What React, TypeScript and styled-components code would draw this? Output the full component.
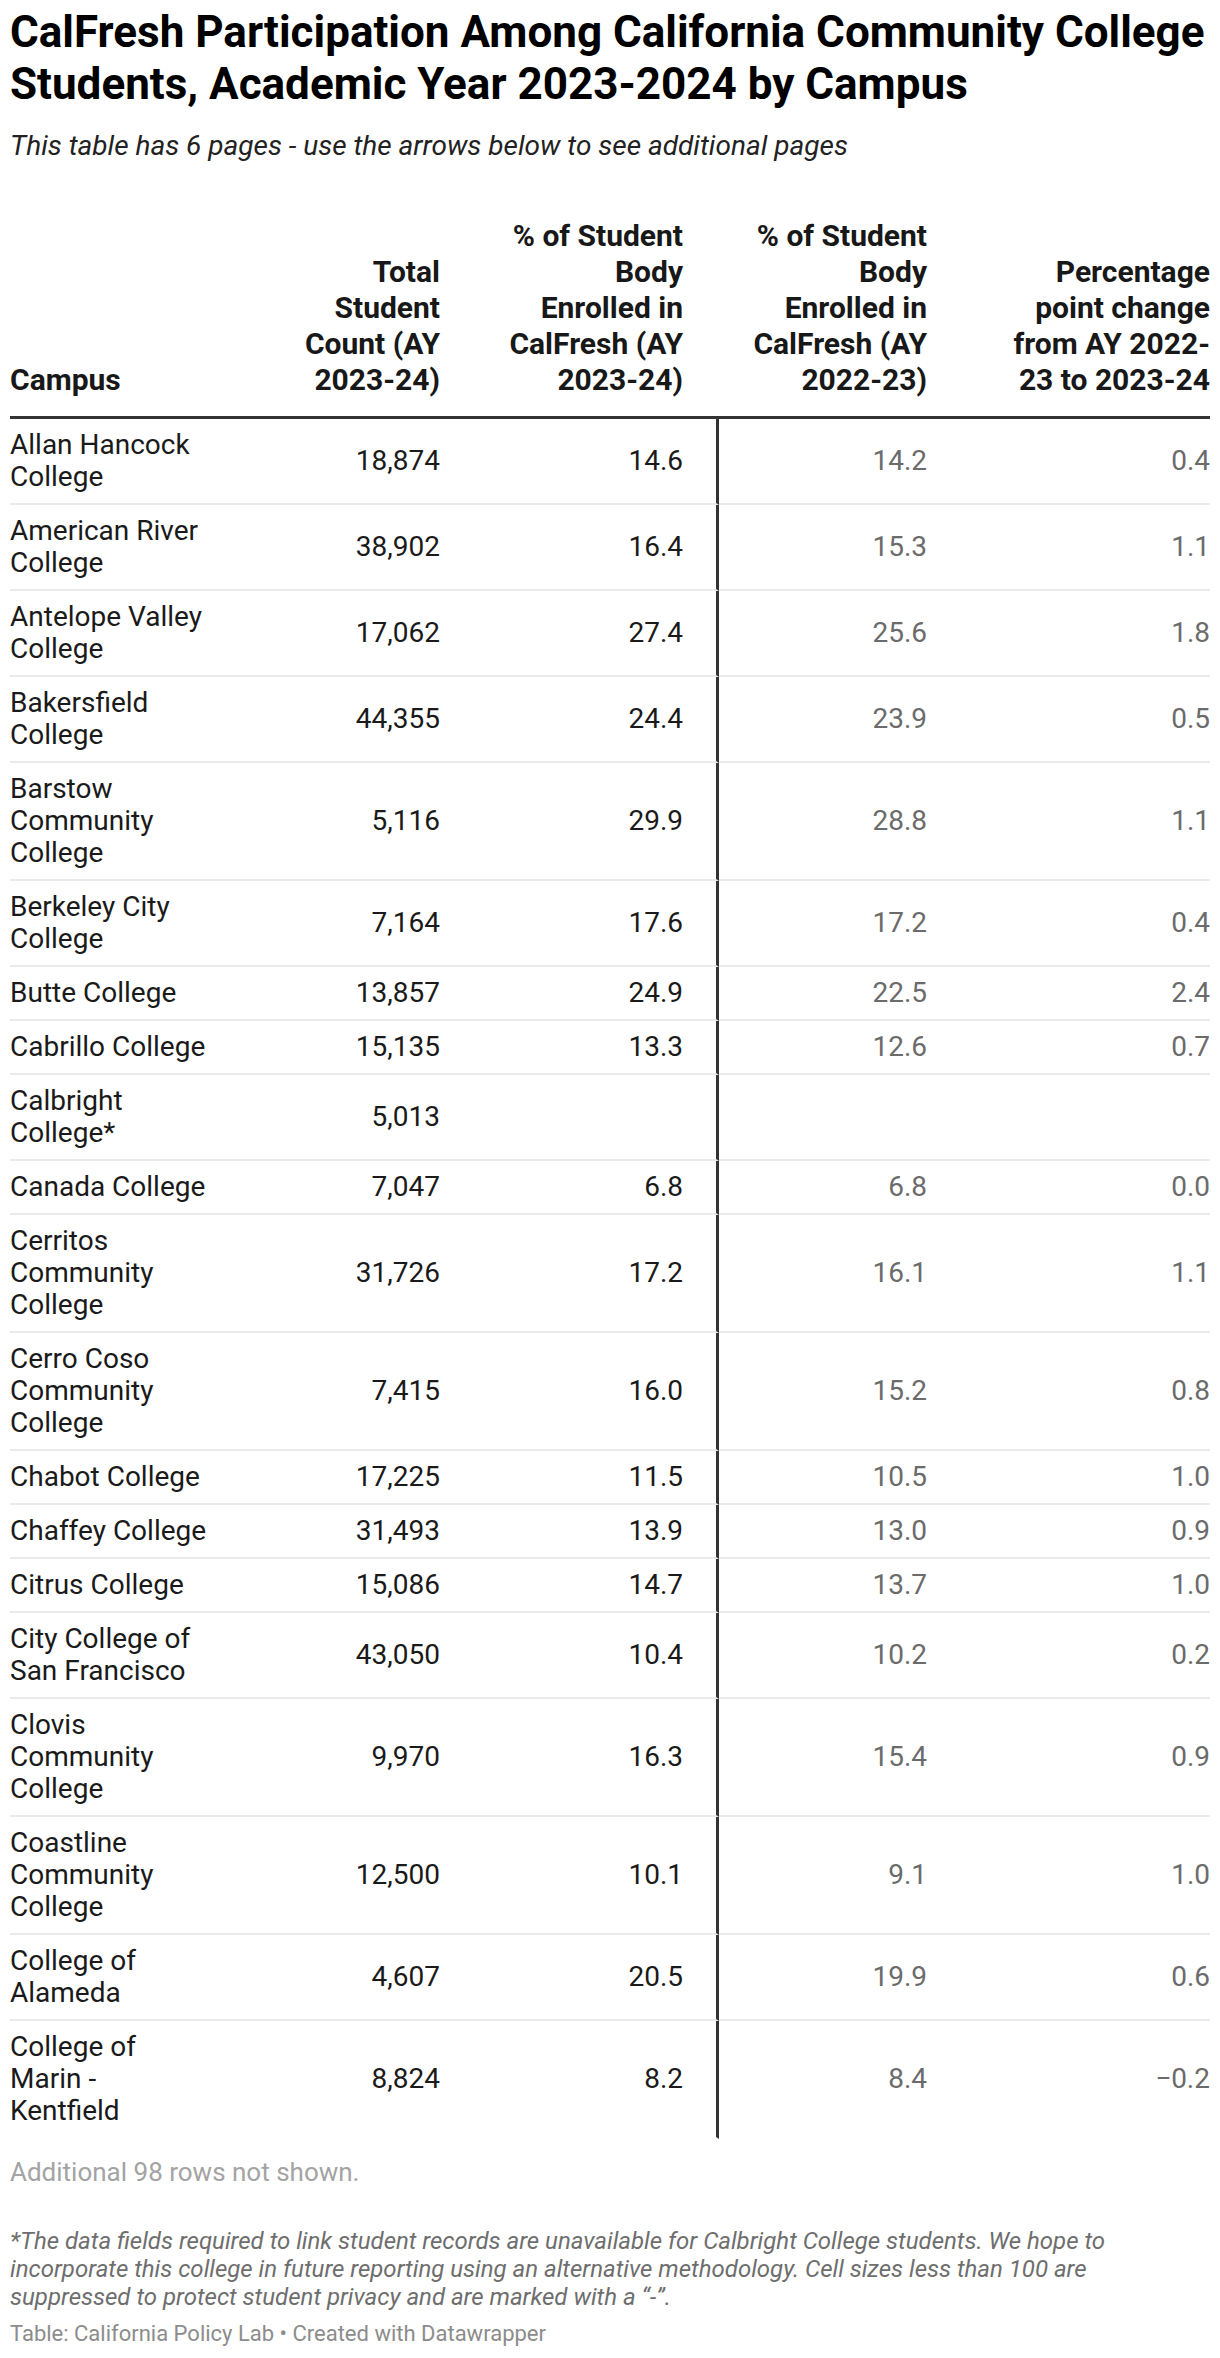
import React from "react";
import styled, { createGlobalStyle } from "styled-components";

const GlobalStyle = createGlobalStyle`
  html, body {
    margin: 0;
    padding: 0;
    background: #ffffff;
  }
  body {
    font-family: Roboto, "Liberation Sans", Arial, sans-serif;
    color: #1d1d1d;
    -webkit-font-smoothing: antialiased;
  }
`;

const Page = styled.div`
  width: 1200px;
  padding: 6px 10px 0 10px;
  box-sizing: content-box;
`;

const Title = styled.h1`
  margin: 0;
  font-size: 44px;
  line-height: 52px;
  font-weight: 700;
  color: #000000;
`;

const Subtitle = styled.p`
  margin: 19px 0 0 0;
  font-size: 28px;
  line-height: 33px;
  font-style: italic;
  color: #222222;
`;

const Table = styled.div`
  margin-top: 56px;
  display: flex;
  flex-direction: column;
`;

const COLS = "270px 170px 269px 218px 273px";

const HeaderRow = styled.div`
  display: grid;
  grid-template-columns: ${COLS};
  align-items: end;
  border-bottom: 3px solid #333333;
`;

const DataRow = styled.div`
  display: grid;
  grid-template-columns: ${COLS};
  align-items: stretch;
`;

type ColProps = { $col: number };

const padFor = (col: number) => {
  switch (col) {
    case 0:
      return "0 70px 0 0";
    case 1:
      return "0 10px 0 5px";
    case 2:
      return "0 36px 0 54px";
    case 3:
      return "0 10px 0 29px";
    default:
      return "0 0 0 61px";
  }
};

const HeadCell = styled.div<ColProps>`
  box-sizing: border-box;
  padding: ${(p) => padFor(p.$col)};
  padding-bottom: 18px;
  font-size: 30px;
  line-height: 36px;
  font-weight: 700;
  color: #181818;
  text-align: ${(p) => (p.$col === 0 ? "left" : "right")};
`;

const Cell = styled.div<ColProps & { $last: boolean }>`
  box-sizing: border-box;
  display: flex;
  align-items: center;
  justify-content: ${(p) => (p.$col === 0 ? "flex-start" : "flex-end")};
  padding: ${(p) => padFor(p.$col)};
  padding-top: 10px;
  padding-bottom: 10px;
  ${(p) => (p.$col === 2 ? "padding-right: 33px; border-right: 3px solid #333333;" : "")}
  border-bottom: 2px solid ${(p) => (p.$last ? "transparent" : "#ebebeb")};
  font-size: 28px;
  line-height: 32px;
  font-weight: 400;
  color: ${(p) => (p.$col >= 3 ? "#6b6b6b" : "#1a1a1a")};
  text-align: ${(p) => (p.$col === 0 ? "left" : "right")};
`;

const Notice = styled.p`
  margin: 18px 0 0 0;
  font-size: 26px;
  line-height: 31px;
  color: #a3a3a3;
`;

const Footnote = styled.p`
  margin: 39px 0 0 0;
  font-size: 24px;
  line-height: 28px;
  font-style: italic;
  color: #6e6e6e;
`;

const Footer = styled.p`
  margin: 9px 0 0 0;
  font-size: 22px;
  line-height: 28px;
  color: #8c8c8c;
`;

type Row = [string, string, string, string, string];

const rows: Row[] = [
  ["Allan Hancock College", "18,874", "14.6", "14.2", "0.4"],
  ["American River College", "38,902", "16.4", "15.3", "1.1"],
  ["Antelope Valley College", "17,062", "27.4", "25.6", "1.8"],
  ["Bakersfield College", "44,355", "24.4", "23.9", "0.5"],
  ["Barstow Community College", "5,116", "29.9", "28.8", "1.1"],
  ["Berkeley City College", "7,164", "17.6", "17.2", "0.4"],
  ["Butte College", "13,857", "24.9", "22.5", "2.4"],
  ["Cabrillo College", "15,135", "13.3", "12.6", "0.7"],
  ["Calbright College*", "5,013", "", "", ""],
  ["Canada College", "7,047", "6.8", "6.8", "0.0"],
  ["Cerritos Community College", "31,726", "17.2", "16.1", "1.1"],
  ["Cerro Coso Community College", "7,415", "16.0", "15.2", "0.8"],
  ["Chabot College", "17,225", "11.5", "10.5", "1.0"],
  ["Chaffey College", "31,493", "13.9", "13.0", "0.9"],
  ["Citrus College", "15,086", "14.7", "13.7", "1.0"],
  ["City College of San Francisco", "43,050", "10.4", "10.2", "0.2"],
  ["Clovis Community College", "9,970", "16.3", "15.4", "0.9"],
  ["Coastline Community College", "12,500", "10.1", "9.1", "1.0"],
  ["College of Alameda", "4,607", "20.5", "19.9", "0.6"],
  ["College of Marin - Kentfield", "8,824", "8.2", "8.4", "\u22120.2"],
];

const headers = [
  "Campus",
  "Total Student Count (AY 2023-24)",
  "% of Student Body Enrolled in CalFresh (AY 2023-24)",
  "% of Student Body Enrolled in CalFresh (AY 2022-23)",
  "Percentage point change from AY 2022-23 to 2023-24",
];

export default function App() {
  return (
    <>
      <GlobalStyle />
      <Page>
        <Title>
          CalFresh Participation Among California Community College Students,
          Academic Year 2023-2024 by Campus
        </Title>
        <Subtitle>
          This table has 6 pages - use the arrows below to see additional pages
        </Subtitle>
        <Table>
          <HeaderRow>
            {headers.map((h, i) => (
              <HeadCell key={i} $col={i}>
                {h}
              </HeadCell>
            ))}
          </HeaderRow>
          {rows.map((r, ri) => (
            <DataRow key={ri}>
              {r.map((v, ci) => (
                <Cell key={ci} $col={ci} $last={ri === rows.length - 1}>
                  {v}
                </Cell>
              ))}
            </DataRow>
          ))}
        </Table>
        <Notice>Additional 98 rows not shown.</Notice>
        <Footnote>
          *The data fields required to link student records are unavailable for
          Calbright College students. We hope to incorporate this college in
          future reporting using an alternative methodology. Cell sizes less
          than 100 are suppressed to protect student privacy and are marked
          with a “-”.
        </Footnote>
        <Footer>Table: California Policy Lab • Created with Datawrapper</Footer>
      </Page>
    </>
  );
}
